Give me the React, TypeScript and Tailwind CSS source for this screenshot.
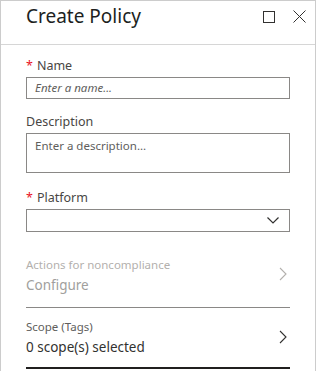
import React from 'react';

const font = { fontFamily: '"Segoe UI", "Noto Sans", "Open Sans", sans-serif' };

const Chevron = ({ color = '#323130' }: { color?: string }) => (
  <svg width="8" height="14" viewBox="0 0 8 14" fill="none">
    <path d="M1 1l6 6-6 6" stroke={color} strokeWidth="1.1" />
  </svg>
);

const App = () => {
  return (
    <div className="w-[316px] h-[371px] bg-white overflow-hidden border-x border-t border-[#cccccc] text-[#323130]" style={font}>
      {/* header */}
      <div className="h-[44px] border-b border-[#d6d6d6] flex items-center pl-[25px] pr-[9px]">
        <h1 className="text-[19px] leading-none flex-1 -mt-[12px] text-[#201f1e]">Create Policy</h1>
        <div className="flex items-center gap-[18px] -mt-[12px]">
          <svg width="12" height="12" viewBox="0 0 12 12">
            <rect x="0.5" y="0.5" width="11" height="11" fill="none" stroke="#323130" />
          </svg>
          <svg width="13" height="13" viewBox="0 0 13 13">
            <path d="M0.5 0.5l12 12M12.5 0.5l-12 12" stroke="#323130" strokeWidth="1" />
          </svg>
        </div>
      </div>

      <div className="pl-[25px] pr-[25px]">
        {/* Name */}
        <div className="mt-[13px] text-[12.5px] leading-[16px] text-[#484644]">
          <span className="text-[#e81123] mr-[4px]">*</span>Name
        </div>
        <div className="mt-[3px] h-[22px] border border-[#8a8886] flex items-center px-[8px]">
          <span className="text-[11.5px] italic text-[#605e5c]">Enter a name...</span>
        </div>

        {/* Description */}
        <div className="mt-[15px] text-[12.5px] leading-[16px] text-[#484644]">Description</div>
        <div className="mt-[3px] h-[40px] border border-[#8a8886] px-[8px] pt-[4px] text-[11.5px] leading-[16px] text-[#605e5c]">
          Enter a description...
        </div>

        {/* Platform */}
        <div className="mt-[17px] text-[12.5px] leading-[16px] text-[#484644]">
          <span className="text-[#e81123] mr-[4px]">*</span>Platform
        </div>
        <div className="mt-[3px] h-[23px] border border-[#8a8886] flex items-center justify-end pr-[10px]">
          <svg width="12" height="7" viewBox="0 0 12 7" fill="none">
            <path d="M0.5 0.5l5.5 5.5 5.5-5.5" stroke="#323130" strokeWidth="1.2" />
          </svg>
        </div>

        {/* Actions */}
        <div className="mt-[25px] flex items-center border-b border-[#8a8886] pb-[13px]">
          <div className="flex-1">
            <div className="text-[11.5px] leading-[16px] text-[#b3b0ad]">Actions for noncompliance</div>
            <div className="mt-[3px] text-[13.5px] leading-[18px] text-[#a19f9d]">Configure</div>
          </div>
          <div className="pr-[3px] pb-[4px]">
            <Chevron color="#b3b0ad" />
          </div>
        </div>

        {/* Scope */}
        <div className="mt-[11px] flex items-center border-b-2 border-[#201f1e] pb-[11px]">
          <div className="flex-1">
            <div className="text-[11.5px] leading-[16px] text-[#605e5c]">Scope (Tags)</div>
            <div className="mt-[3px] text-[13.5px] leading-[18px] text-[#323130]">0 scope(s) selected</div>
          </div>
          <div className="pr-[3px] pb-[2px]">
            <Chevron />
          </div>
        </div>
      </div>
    </div>
  );
};

export default App;
